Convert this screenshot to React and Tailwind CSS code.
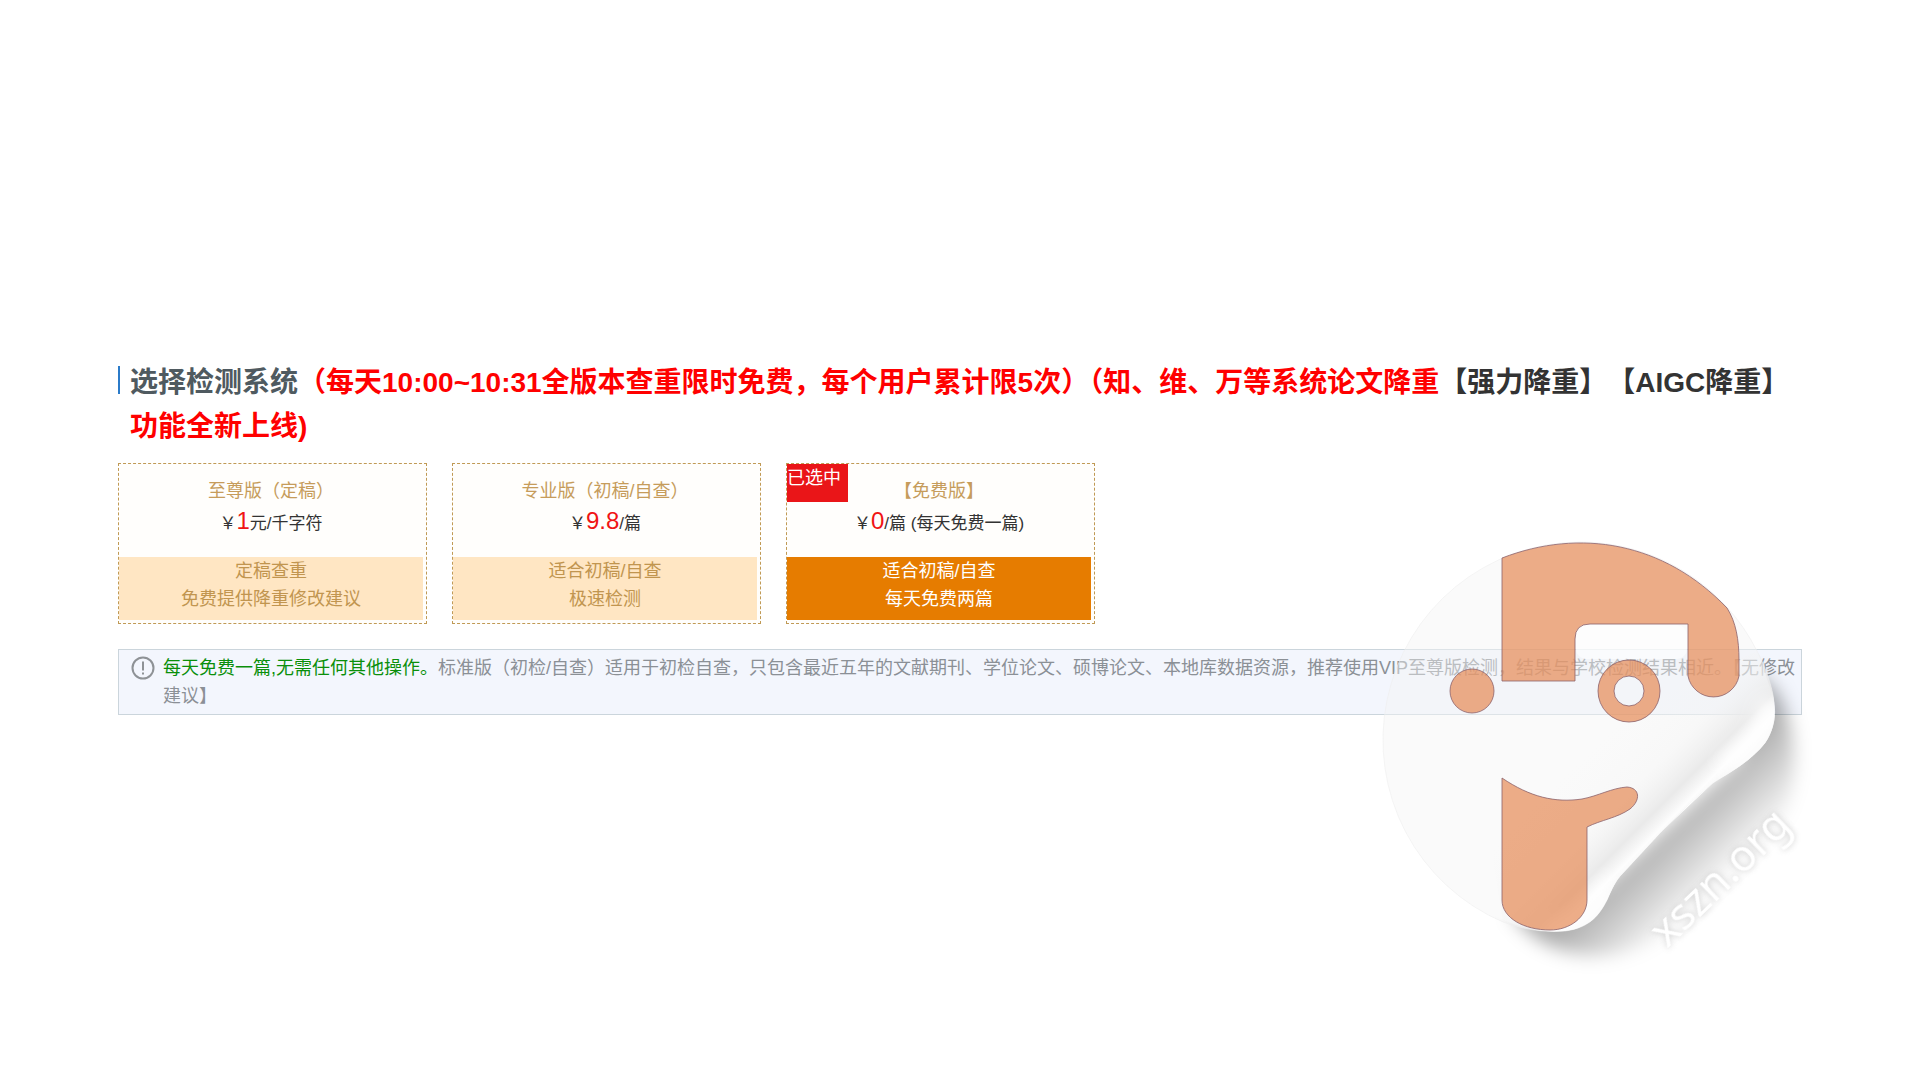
import React, { useState } from 'react';
import clsx from 'clsx';

const plans = [
  {
    id: 'vip',
    name: '至尊版（定稿）',
    price: '1',
    unit: '元/千字符',
    lines: ['定稿查重', '免费提供降重修改建议']
  },
  {
    id: 'pro',
    name: '专业版（初稿/自查）',
    price: '9.8',
    unit: '/篇',
    lines: ['适合初稿/自查', '极速检测']
  },
  {
    id: 'free',
    name: '【免费版】',
    price: '0',
    unit: '/篇 (每天免费一篇)',
    lines: ['适合初稿/自查', '每天免费两篇']
  }
];

const PlanCard = ({ plan, selected, onSelect }) => (
  <button
    type="button"
    aria-pressed={selected}
    onClick={onSelect}
    className="relative w-[309px] border border-dashed border-[#c09a55] bg-[#fffefc] pt-[13px] pr-[3px] pb-[3px] text-center text-lg leading-7 cursor-pointer"
  >
    {selected && (
      <span className="absolute top-0 left-0 h-[38px] w-[61px] bg-[#ea1518] text-left text-white">
        已选中
      </span>
    )}
    <span className="block text-[#c69c5b]">{plan.name}</span>
    <span className="block h-[52px] text-[17px] leading-8 text-[#333]">
      ￥<span className="text-2xl leading-8 text-[#f01414]">{plan.price}</span>
      {plan.unit}
    </span>
    <span
      className={clsx(
        'block pb-[7px]',
        selected ? 'bg-[#e67c00] text-white' : 'bg-[#ffe6c3] text-[#c1954f]'
      )}
    >
      {plan.lines.map((line) => (
        <span key={line} className="block">{line}</span>
      ))}
    </span>
  </button>
);

const Sticker = () => (
  <svg
    viewBox="1380 520 440 460"
    className="pointer-events-none absolute top-[520px] right-[100px] w-[440px]"
    aria-hidden="true"
  >
    <defs>
      <linearGradient id="paper" gradientUnits="userSpaceOnUse" x1="1600" y1="740" x2="1681" y2="821">
        <stop offset="0" stopColor="#f6f6f6" stopOpacity="0" />
        <stop offset="0.5" stopColor="#f3f3f3" stopOpacity="0.3" />
        <stop offset="0.78" stopColor="#e8e8e8" stopOpacity="0.9" />
        <stop offset="0.92" stopColor="#fdfdfd" />
        <stop offset="1" stopColor="#f6f6f6" />
      </linearGradient>
      <linearGradient id="shade" gradientUnits="userSpaceOnUse" x1="1660" y1="830" x2="1720" y2="890">
        <stop offset="0" stopColor="#000" stopOpacity="0.32" />
        <stop offset="0.4" stopColor="#000" stopOpacity="0.2" />
        <stop offset="1" stopColor="#000" stopOpacity="0" />
      </linearGradient>
      <filter id="soft" x="-20%" y="-20%" width="140%" height="140%">
        <feGaussianBlur stdDeviation="9" />
      </filter>
      <clipPath id="outside">
        <path d="M1820 520V980H1380V880L1440 880C1480 910 1515 931 1550 931C1590 931 1598 912 1607 900C1612 889 1615 881 1623 873L1660 833L1713 783C1727 774 1750 762 1765 743C1775 728 1778 712 1772 693L1757 651V520Z" />
      </clipPath>
      <clipPath id="curl">
        <path d="M1757 651C1764 664 1770 680 1773 695C1776 714 1774 730 1765 743C1750 762 1727 774 1713 783C1695 797 1675 818 1660 833L1623 873C1615 881 1612 889 1607 900C1600 914 1590 928 1565 931C1540 933 1520 928 1503 922L1480 780Z" />
      </clipPath>
    </defs>

    <g clipPath="url(#outside)">
      <path
        d="M1510 912C1540 955 1600 970 1655 940L1755 870C1800 815 1805 740 1776 690L1755 670L1740 760L1600 890Z"
        fill="url(#shade)"
        filter="url(#soft)"
      />
    </g>

    <path
      d="M1580 542A198 198 0 0 1 1757 651C1764 664 1770 680 1773 695C1776 714 1774 730 1765 743C1750 762 1727 774 1713 783C1695 797 1675 818 1660 833L1623 873C1615 881 1612 889 1607 900C1600 914 1590 928 1565 931C1540 933 1520 928 1503 922A198 198 0 0 1 1580 542Z"
      fill="#f3f3f3"
      fillOpacity="0.45"
      stroke="#eeeeee"
      strokeOpacity="0.6"
    />
    <path
      d="M1820 600V980H1480V780Z"
      clipPath="url(#curl)"
      fill="url(#paper)"
    />
    {/* bright rims at both ends of the fold */}
    <g clipPath="url(#curl)" fill="none" stroke="#ffffff" filter="url(#soft)">
      <path d="M1768 700C1772 725 1758 745 1725 770" strokeWidth="20" />
      <path d="M1540 930C1590 930 1595 905 1612 885" strokeWidth="20" />
    </g>
    <rect x="1576" y="625" width="111" height="34" rx="10" fill="#ffffff" fillOpacity="0.6" />

    <g fill="#e68a56" fillOpacity="0.7" stroke="#8c626a" strokeOpacity="0.8">
      <path d="M1502 558C1580 528 1664 542 1727 608C1736 622 1739 640 1739 660V676A26 26 0 0 1 1688 676V624H1590Q1575 624 1575 639V681H1502Z" />
      <circle cx="1472" cy="691" r="22" />
      <path
        fillRule="evenodd"
        d="M1598 691a31 31 0 1 0 62 0a31 31 0 1 0 -62 0ZM1614 691a15 15 0 1 0 30 0a15 15 0 1 0 -30 0Z"
      />
      <path d="M1502 778C1530 797 1555 803 1582 799C1598 796 1612 788 1627 787C1640 788 1641 800 1630 809C1617 818 1601 820 1587 827V900C1587 917 1570 930 1550 930C1524 930 1502 918 1502 900Z" />
    </g>

    <text
      transform="translate(1667 949) rotate(-44)"
      className="font-['Noto_Sans'] text-[44px] drop-shadow-[0_0_3px_#cccccc]"
      fill="#ffffff"
    >
      xszn.org
    </text>
  </svg>
);

const App = () => {
  const [selected, setSelected] = useState('free');

  return (
    <div className="relative min-h-screen bg-white px-[118px] pt-[361px] font-['Liberation_Sans','Noto_Sans_CJK_SC',sans-serif]">
      <div className="flex items-start">
        <span className="mt-[5px] h-7 w-0.5 shrink-0 bg-[#2b7bc9]"></span>
        <h1 className="ml-2.5 text-[28px] leading-[44px] font-bold text-[#4f5a60]">
          选择检测系统
          <span className="text-[#ff0000]">
            （每天10:00~10:31全版本查重限时免费，每个用户累计限5次）（知、维、万等系统论文降重
            <span className="text-[#333] [text-spacing-trim:space-all]">【强力降重】【AIGC降重】</span>
            功能全新上线)
          </span>
        </h1>
      </div>

      <div className="mt-3.5 flex flex-wrap gap-[25px]">
        {plans.map((plan) => (
          <PlanCard
            key={plan.id}
            plan={plan}
            selected={selected === plan.id}
            onSelect={() => setSelected(plan.id)}
          />
        ))}
      </div>

      <div className="mt-[25px] flex items-start border border-[#cbd5dc] bg-[#f3f6fd] py-1 pl-3">
        <svg viewBox="0 0 24 24" className="mt-0.5 mr-2 size-6 shrink-0" fill="none" stroke="#8e9296" strokeWidth="2">
          <circle cx="12" cy="12" r="10.5" />
          <path d="M12 5.5V14.5M12 16.5V18.5" />
        </svg>
        <p className="text-lg leading-7 text-[#8b9096]">
          <span className="text-[#0a8f0a]">每天免费一篇,无需任何其他操作。</span>
          <span>
            标准版（初检/自查）适用于初检自查，只包含最近五年的文献期刊、学位论文、硕博论文、本地库数据资源，推荐使用VIP至尊版检测，结果与学校检测结果相近。【无修改建议】
          </span>
        </p>
      </div>

      <Sticker />
    </div>
  );
};

export default App;
